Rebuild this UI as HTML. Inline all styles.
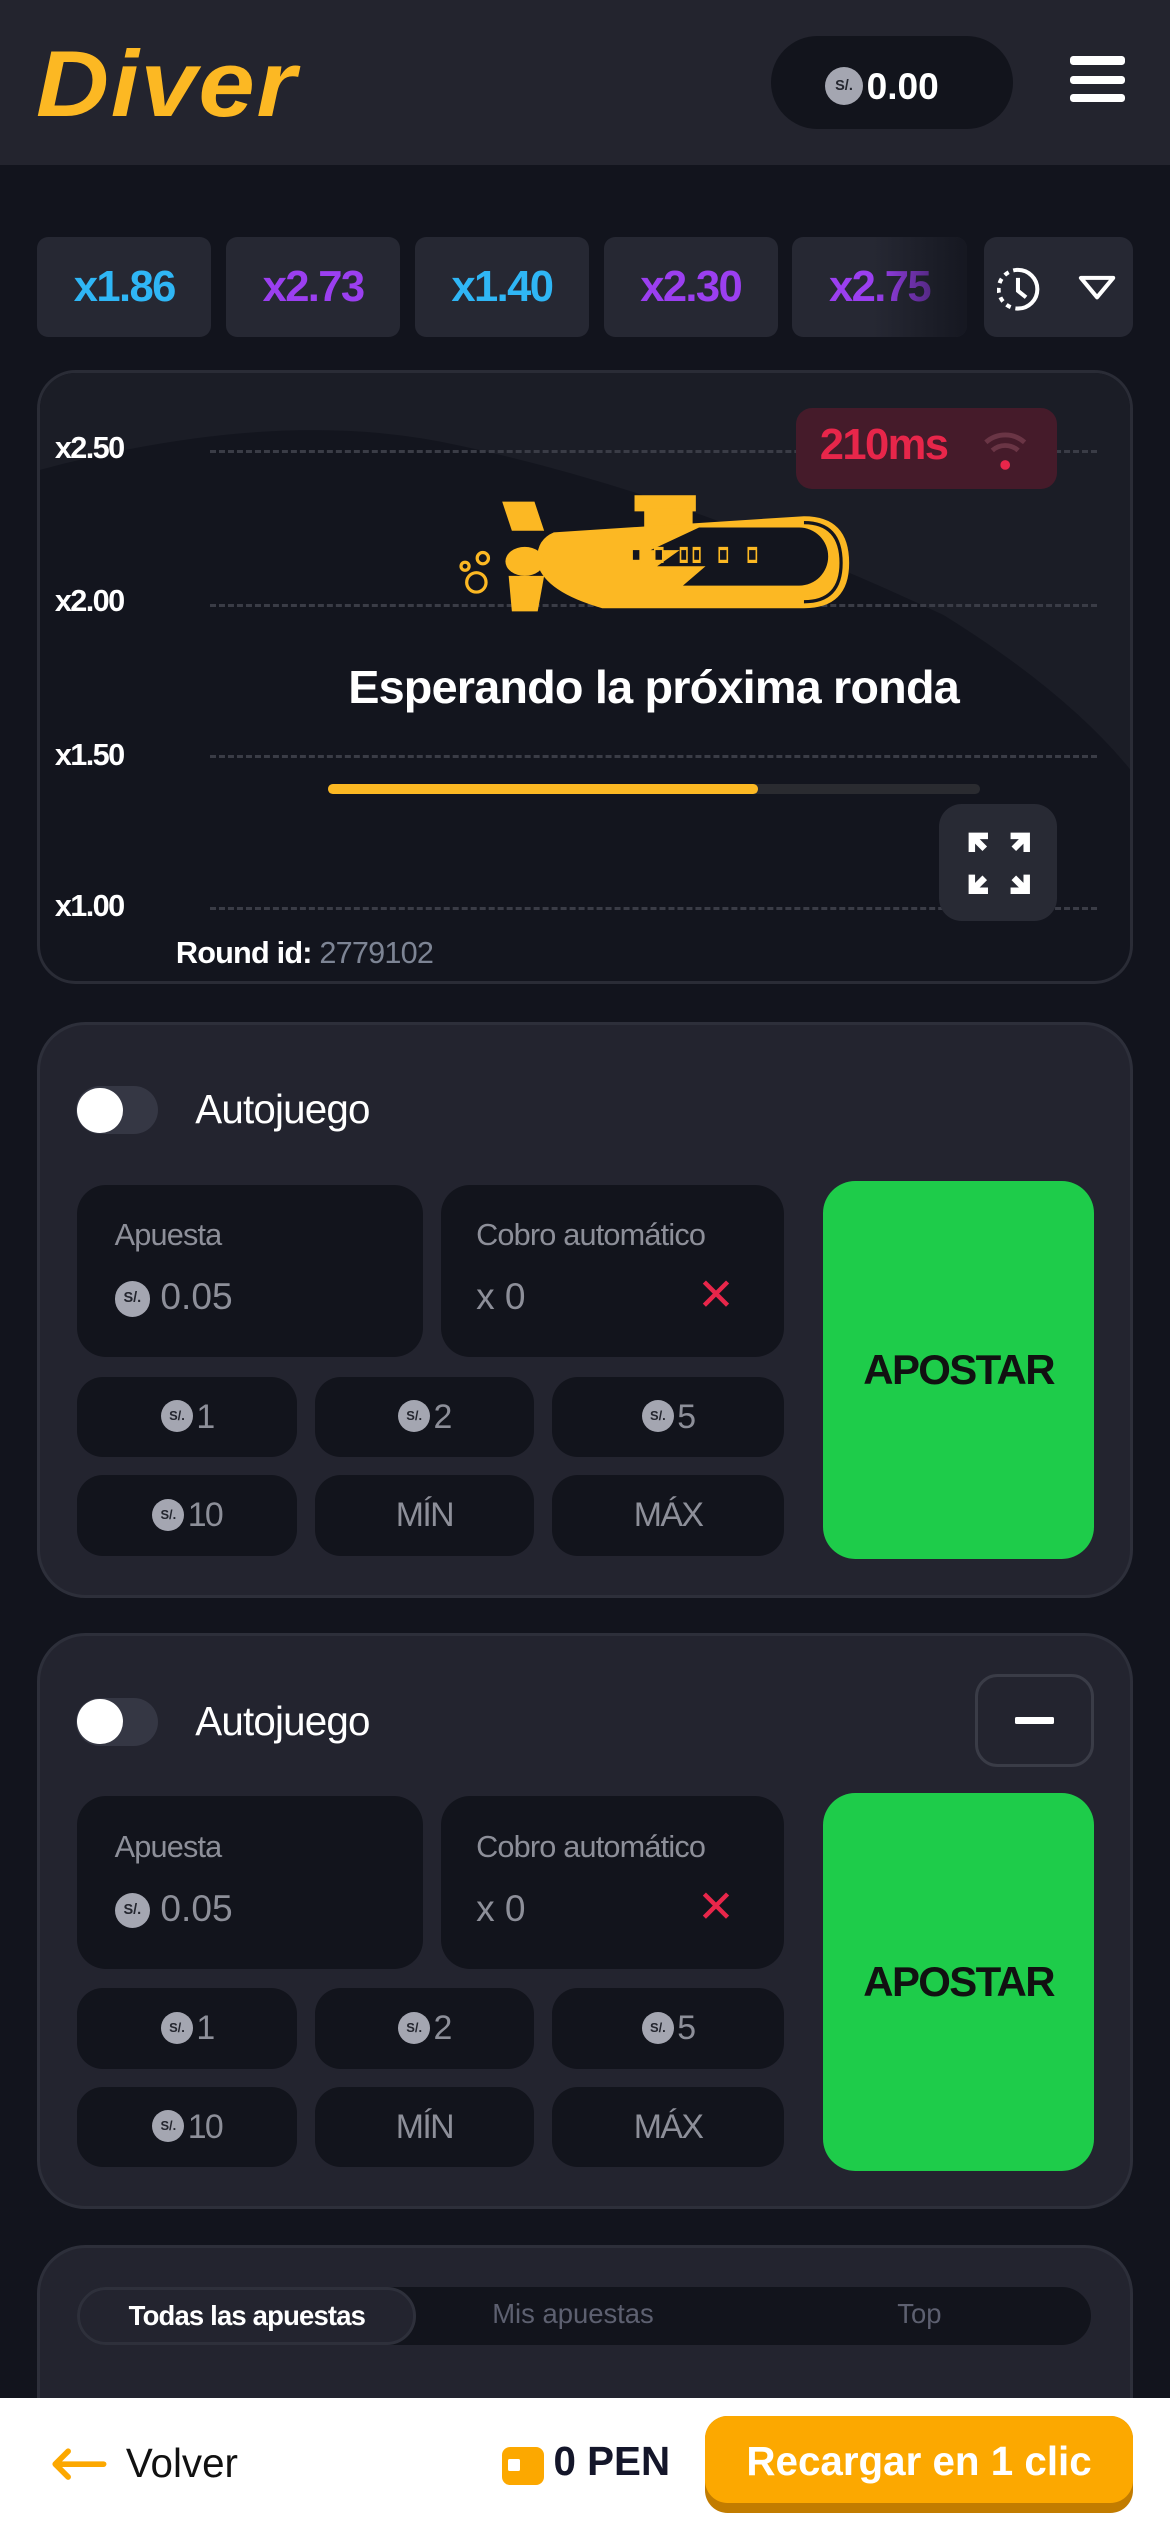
<!DOCTYPE html>
<html><head><meta charset="utf-8"><style>
*{margin:0;padding:0;box-sizing:border-box}
html,body{width:1170px;height:2532px;overflow:hidden;background:#12141d}
#r{zoom:1.61379;width:725px;height:1569px;position:relative;background:#12141d;font-family:"Liberation Sans",sans-serif;color:#fff}
.a{position:absolute}
.hdr{left:0;top:0;width:725px;height:102px;background:#23242e}
.chip{top:147px;width:108px;height:62px;background:#262833;border-radius:7px;font-weight:bold;font-size:27px;text-align:center;line-height:62px;letter-spacing:-1px}
.cy{color:#2fb6f5}.cp{color:#9b3ff0}
.coin{display:inline-block;width:22px;height:22px;border-radius:50%;background:#a4a6b1;color:#24262f;font-size:9px;font-weight:bold;line-height:22px;text-align:center;vertical-align:middle;font-family:"Liberation Sans",sans-serif;letter-spacing:0}
.panel{left:23px;width:679px;background:#23242f;border:2px solid #2d2f3a;border-radius:30px}
.box{background:#12141c;border-radius:18px}
.sm{background:#12141c;border-radius:16px;height:50px;width:136px;text-align:center;line-height:50px;color:#8d8f99;font-size:21px;letter-spacing:-1px}
.sm .coin{width:20px;height:20px;line-height:20px;font-size:8px;margin-right:2px;margin-top:-3px}
.lbl{color:#8d8f99;font-size:19px;letter-spacing:-.5px}
.val{color:#8d8f99;font-size:23px}
.bet{background:#1ecc4a;border-radius:20px;color:#111;font-weight:bold;font-size:26px;text-align:center;letter-spacing:-1px}
.tg{width:51px;height:30px;border-radius:15px;background:#353744}
.tg:before{content:"";position:absolute;left:1px;top:1px;width:28px;height:28px;border-radius:50%;background:#fff}
.ax{left:34px;font-size:19px;font-weight:bold;color:#fff;letter-spacing:-1px}
.dl{left:130px;width:550px;height:0;border-top:2px dashed #3a3c46}
</style></head><body><div id="r">
<div class="a hdr"></div>
<div class="a" style="left:22px;top:20px;font-style:italic;font-weight:bold;font-size:58px;color:#fcb823;line-height:64px;letter-spacing:1px;transform:scaleX(1.08);transform-origin:left">Diver</div>
<div class="a" style="left:478px;top:22px;width:150px;height:58px;border-radius:29px;background:#12141c"></div>
<div class="a" style="left:511px;top:40px"><span class="coin" style="width:24px;height:24px;line-height:24px">S/.</span><span style="font-weight:bold;font-size:23px;vertical-align:middle;margin-left:2px">0.00</span></div>
<div class="a" style="left:663px;top:35px;width:34px;height:5px;background:#fff;border-radius:2px"></div>
<div class="a" style="left:663px;top:47px;width:34px;height:5px;background:#fff;border-radius:2px"></div>
<div class="a" style="left:663px;top:58px;width:34px;height:5px;background:#fff;border-radius:2px"></div>

<div class="a chip cy" style="left:23px">x1.86</div>
<div class="a chip cp" style="left:140px">x2.73</div>
<div class="a chip cy" style="left:257px">x1.40</div>
<div class="a chip cp" style="left:374px">x2.30</div>
<div class="a chip cp" style="left:491px;overflow:hidden">x2.75<div class="a" style="left:50px;top:0;width:70px;height:62px;background:linear-gradient(90deg,rgba(18,20,29,0),#12141d)"></div></div>
<div class="a" style="left:610px;top:147px;width:92px;height:62px;background:#262833;border-radius:8px"></div>
<svg class="a" style="left:618px;top:164px" width="80" height="30"><path d="M13 3a12 12 0 1 1 0 24" fill="none" stroke="#fff" stroke-width="2.5"/><path d="M13 3a12 12 0 0 0 0 24" fill="none" stroke="#fff" stroke-width="2.5" stroke-dasharray="3 3"/><path d="M13 8v8l5 4" fill="none" stroke="#fff" stroke-width="2.5"/><path d="M52 8h20l-10 12z" fill="none" stroke="#fff" stroke-width="2.5" stroke-linejoin="round"/></svg>

<div class="a" style="left:23px;top:229px;width:679px;height:381px;border:2px solid #2a2c36;border-radius:24px;background:#13151e;overflow:hidden">
<svg class="a" style="left:0;top:0" width="679" height="381"><path d="M0 60 Q150 20 260 45 Q400 75 560 150 Q640 200 679 250 L679 0 L0 0Z" fill="#1b1d26"/></svg>
</div>
<div class="a ax" style="top:267px">x2.50</div><div class="a dl" style="top:279px"></div>
<div class="a ax" style="top:362px">x2.00</div><div class="a dl" style="top:374px"></div>
<div class="a ax" style="top:457px">x1.50</div><div class="a dl" style="top:468px"></div>
<div class="a ax" style="top:551px">x1.00</div><div class="a dl" style="top:562px"></div>
<div class="a" style="left:493px;top:253px;width:162px;height:50px;background:#451b2a;border-radius:10px"></div>
<div class="a" style="left:508px;top:261px;color:#e8264a;font-weight:bold;font-size:27px;letter-spacing:-1px">210ms</div>
<svg class="a" style="left:608px;top:262px" width="30" height="32"><path d="M3 12a18 18 0 0 1 24 0M7 17a12 12 0 0 1 16 0" fill="none" stroke="#6a3545" stroke-width="3"/><circle cx="15" cy="26" r="3" fill="#e8264a"/></svg>
<svg class="a" style="left:283px;top:305px" width="245" height="75">
<g fill="#fcb823">
<rect x="110" y="2" width="38" height="10"/><rect x="116" y="10" width="30" height="12"/>
<path d="M28 6h20l6 18H34z"/>
<path d="M60 25 L215 15 Q243 15 243 44 Q243 72 215 72 L90 72 Q55 62 50 45 Q48 30 60 25Z"/>
<ellipse cx="42" cy="43" rx="12" ry="9"/>
<path d="M32 52h22l-4 22H34z"/>
</g>
<path d="M150 22h62a18 18 0 0 1 0 36H140l14-12h-30l14-10h-18z" fill="#13151e"/>
<path d="M215 19 Q238 19 238 44 Q238 68 215 68" fill="none" stroke="#13151e" stroke-width="2"/>
<g fill="#fcb823"><rect x="108" y="34" width="6" height="10"/><rect x="122" y="34" width="6" height="10"/><rect x="138" y="34" width="5" height="10"/><rect x="146" y="34" width="5" height="10"/><rect x="162" y="34" width="6" height="10"/><rect x="180" y="34" width="6" height="10"/></g>
<g fill="#13151e"><rect x="109" y="36" width="4" height="6"/><rect x="123" y="36" width="4" height="6"/><rect x="139" y="36" width="3" height="6"/><rect x="147" y="36" width="3" height="6"/><rect x="163" y="36" width="4" height="6"/><rect x="181" y="36" width="4" height="6"/></g>
<circle cx="12" cy="56" r="6" fill="none" stroke="#fcb823" stroke-width="2"/><circle cx="16" cy="41" r="3.5" fill="none" stroke="#fcb823" stroke-width="2"/><circle cx="5" cy="46" r="2.5" fill="none" stroke="#fcb823" stroke-width="2"/></svg>
<div class="a" style="left:0;width:810px;top:409px;text-align:center;font-weight:bold;font-size:29px;letter-spacing:-.5px">Esperando la próxima ronda</div>
<div class="a" style="left:203px;top:486px;width:404px;height:6px;border-radius:3px;background:#2a2b30"></div>
<div class="a" style="left:203px;top:486px;width:267px;height:6px;border-radius:3px;background:#fcb823"></div>
<div class="a" style="left:582px;top:498px;width:73px;height:73px;border-radius:14px;background:#282a34"></div>
<svg class="a" style="left:599px;top:515px" width="40" height="40" fill="none" stroke="#fff" stroke-width="4"><path d="M3 13V3h10M3 3l8 8M37 13V3H27M37 3l-8 8M3 27v10h10M3 37l8-8M37 27v10H27M37 37l-8-8"/></svg>
<div class="a" style="left:109px;top:580px;font-size:19px;font-weight:bold;letter-spacing:-.5px">Round id: <span style="color:#7d8494;font-weight:normal">2779102</span></div>

<!-- panel 1 -->
<div class="a panel" style="top:633px;height:357px"></div>
<div class="a tg" style="left:47px;top:673px"></div>
<div class="a" style="left:121px;top:673px;font-size:25px;letter-spacing:-.5px">Autojuego</div>
<div class="a box" style="left:48px;top:734px;width:214px;height:107px"></div>
<div class="a lbl" style="left:71px;top:755px">Apuesta</div>
<div class="a val" style="left:71px;top:790px"><span class="coin">S/.</span> 0.05</div>
<div class="a box" style="left:273px;top:734px;width:213px;height:107px"></div>
<div class="a lbl" style="left:295px;top:755px">Cobro automático</div>
<div class="a val" style="left:295px;top:790px">x 0</div>
<div class="a" style="left:432px;top:786px;color:#e8264a;font-size:28px">✕</div>
<div class="a sm" style="left:48px;top:853px"><span class="coin">S/.</span>1</div>
<div class="a sm" style="left:195px;top:853px"><span class="coin">S/.</span>2</div>
<div class="a sm" style="left:342px;top:853px;width:144px"><span class="coin">S/.</span>5</div>
<div class="a sm" style="left:48px;top:914px"><span class="coin">S/.</span>10</div>
<div class="a sm" style="left:195px;top:914px">MÍN</div>
<div class="a sm" style="left:342px;top:914px;width:144px">MÁX</div>
<div class="a bet" style="left:510px;top:732px;width:168px;height:234px;line-height:234px">APOSTAR</div>

<!-- panel 2 -->
<div class="a panel" style="top:1012px;height:357px"></div>
<div class="a tg" style="left:47px;top:1052px"></div>
<div class="a" style="left:121px;top:1052px;font-size:25px;letter-spacing:-.5px">Autojuego</div>
<div class="a" style="left:604px;top:1037px;width:74px;height:58px;border:2px solid #3a3c47;border-radius:14px"></div>
<div class="a" style="left:629px;top:1064px;width:24px;height:4px;background:#fff;border-radius:1px"></div>
<div class="a box" style="left:48px;top:1113px;width:214px;height:107px"></div>
<div class="a lbl" style="left:71px;top:1134px">Apuesta</div>
<div class="a val" style="left:71px;top:1169px"><span class="coin">S/.</span> 0.05</div>
<div class="a box" style="left:273px;top:1113px;width:213px;height:107px"></div>
<div class="a lbl" style="left:295px;top:1134px">Cobro automático</div>
<div class="a val" style="left:295px;top:1169px">x 0</div>
<div class="a" style="left:432px;top:1165px;color:#e8264a;font-size:28px">✕</div>
<div class="a sm" style="left:48px;top:1232px"><span class="coin">S/.</span>1</div>
<div class="a sm" style="left:195px;top:1232px"><span class="coin">S/.</span>2</div>
<div class="a sm" style="left:342px;top:1232px;width:144px"><span class="coin">S/.</span>5</div>
<div class="a sm" style="left:48px;top:1293px"><span class="coin">S/.</span>10</div>
<div class="a sm" style="left:195px;top:1293px">MÍN</div>
<div class="a sm" style="left:342px;top:1293px;width:144px">MÁX</div>
<div class="a bet" style="left:510px;top:1111px;width:168px;height:234px;line-height:234px">APOSTAR</div>

<!-- panel 3 -->
<div class="a panel" style="top:1391px;height:200px"></div>
<div class="a" style="left:48px;top:1417px;width:628px;height:36px;border-radius:18px;background:#12141c"></div>
<div class="a" style="left:48px;top:1417px;width:210px;height:36px;border-radius:18px;background:#23242f;border:2px solid #2e303b;text-align:center;line-height:32px;font-size:17px;font-weight:bold;letter-spacing:-.5px">Todas las apuestas</div>
<div class="a" style="left:305px;top:1424px;font-size:17px;color:#5d6070">Mis apuestas</div>
<div class="a" style="left:556px;top:1424px;font-size:17px;color:#5d6070">Top</div>

<!-- footer -->
<div class="a" style="left:0;top:1486px;width:725px;height:83px;background:#fff"></div>
<svg class="a" style="left:32px;top:1517px" width="34" height="20"><path d="M2 10h30M10 2L2 10l8 8" fill="none" stroke="#fca800" stroke-width="3.5" stroke-linecap="round" stroke-linejoin="round"/></svg>
<div class="a" style="left:78px;top:1512px;font-size:25px;color:#111">Volver</div>
<div class="a" style="left:311px;top:1516px;width:26px;height:24px;border-radius:5px;background:#fca800"></div>
<div class="a" style="left:315px;top:1524px;width:7px;height:7px;background:#fff;border-radius:1px"></div>
<div class="a" style="left:343px;top:1511px;font-size:25px;font-weight:bold;color:#14162a">0 PEN</div>
<div class="a" style="left:437px;top:1497px;width:265px;height:60px;border-radius:14px;background:#c27c00"></div>
<div class="a" style="left:437px;top:1497px;width:265px;height:54px;border-radius:14px;background:#fca800;color:#fff;font-weight:bold;font-size:25px;text-align:center;line-height:56px">Recargar en 1 clic</div>
</div></body></html>
